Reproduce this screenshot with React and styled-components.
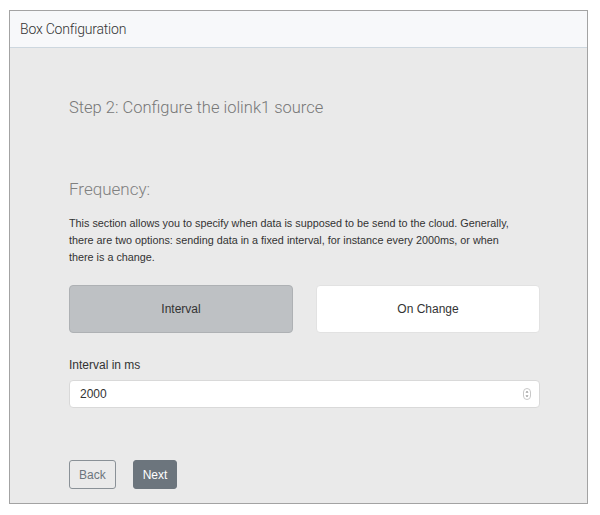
import React, { useState } from 'react'
import styled, { createGlobalStyle } from 'styled-components'

const GlobalStyle = createGlobalStyle`
  html, body {
    margin: 0;
    padding: 0;
    background: #ffffff;
  }
  body {
    font-family: "Liberation Sans", Arial, sans-serif;
    color: #333;
  }
`

const App = () => {
  const [mode, setMode] = useState('interval')
  const [interval, setInterval] = useState('2000')

  return (
    <Page>
      <GlobalStyle />
      <Card>
        <CardHeader>Box Configuration</CardHeader>
        <CardBody>
          <StepTitle>Step 2: Configure the iolink1 source</StepTitle>
          <SectionTitle>Frequency:</SectionTitle>
          <Description>
            This section allows you to specify when data is supposed to be send
            to the cloud. Generally, there are two options: sending data in a
            fixed interval, for instance every 2000ms, or when there is a
            change.
          </Description>
          <ChoiceRow>
            <Choice
              $active={mode === 'interval'}
              onClick={() => setMode('interval')}
            >
              Interval
            </Choice>
            <Choice
              $active={mode === 'change'}
              onClick={() => setMode('change')}
            >
              On Change
            </Choice>
          </ChoiceRow>
          <FieldLabel htmlFor="interval">Interval in ms</FieldLabel>
          <NumberField>
            <NumberInput
              id="interval"
              type="text"
              value={interval}
              onChange={(e) => setInterval(e.target.value)}
            />
            <Spinner viewBox="0 0 8 12" aria-hidden="true">
              <rect x="0.5" y="0.5" width="7" height="11" rx="3.5" fill="none" stroke="#c8c8c8" />
              <path d="M2.5 4.6 L4 3 L5.5 4.6 Z" fill="#777" />
              <path d="M2.5 7.4 L4 9 L5.5 7.4 Z" fill="#777" />
            </Spinner>
          </NumberField>
          <Actions>
            <BackButton>Back</BackButton>
            <NextButton>Next</NextButton>
          </Actions>
        </CardBody>
      </Card>
    </Page>
  )
}

export default App

const Page = styled.div`
  padding: 10px 12px 0 9px;
  width: 600px;
  box-sizing: border-box;
`

const Card = styled.div`
  border: 1px solid #a3a3a3;
  background: #eaeaea;
  height: 494px;
  box-sizing: border-box;
  display: flex;
  flex-direction: column;
`

const CardHeader = styled.div`
  background: #f7f8fa;
  border-bottom: 1px solid #cdd7df;
  height: 37px;
  box-sizing: border-box;
  display: flex;
  align-items: center;
  padding: 0 10px;
  font-family: "Roboto", "Liberation Sans", sans-serif;
  font-weight: 300;
  font-size: 14px;
  letter-spacing: -0.2px;
  color: #333;
`

const CardBody = styled.div`
  padding: 48px 47px 0 59px;
  display: flex;
  flex-direction: column;
`

const StepTitle = styled.h2`
  margin: 0;
  font-family: "Roboto", "Liberation Sans", sans-serif;
  font-weight: 300;
  font-size: 16.5px;
  line-height: 24px;
  color: #777;
`

const SectionTitle = styled.h3`
  margin: 57px 0 0;
  font-family: "Roboto", "Liberation Sans", sans-serif;
  font-weight: 300;
  font-size: 17px;
  line-height: 24px;
  color: #808080;
`

const Description = styled.p`
  margin: 14px 0 0;
  max-width: 450px;
  font-size: 10.8px;
  line-height: 17px;
  color: #333;
`

const ChoiceRow = styled.div`
  display: grid;
  grid-template-columns: 1fr 1fr;
  gap: 23px;
  margin-top: 19px;
`

const Choice = styled.button`
  height: 48px;
  border-radius: 4px;
  border: 1px solid ${(props) => (props.$active ? '#aeb1b4' : '#e2e2e2')};
  background: ${(props) => (props.$active ? '#bec1c4' : '#ffffff')};
  font-family: "Liberation Sans", Arial, sans-serif;
  font-size: 12px;
  color: #333;
  cursor: pointer;
`

const FieldLabel = styled.label`
  margin-top: 24px;
  font-size: 12px;
  line-height: 16px;
  color: #333;
`

const NumberField = styled.div`
  position: relative;
  margin-top: 7px;
`

const NumberInput = styled.input`
  width: 100%;
  box-sizing: border-box;
  height: 28px;
  border: 1px solid #d9d9d9;
  border-radius: 4px;
  background: #fff;
  padding: 0 10px;
  font-family: "Liberation Sans", Arial, sans-serif;
  font-size: 12px;
  color: #333;
  outline: none;
`

const Spinner = styled.svg`
  position: absolute;
  right: 9px;
  top: 8px;
  width: 8px;
  height: 12px;
`

const Actions = styled.div`
  display: flex;
  gap: 17px;
  margin-top: 52px;
`

const BaseButton = styled.button`
  height: 29px;
  padding: 0 9px;
  border-radius: 3px;
  font-family: "Liberation Sans", Arial, sans-serif;
  font-size: 12px;
  cursor: pointer;
`

const BackButton = styled(BaseButton)`
  background: transparent;
  border: 1px solid #8a9197;
  color: #6c757d;
`

const NextButton = styled(BaseButton)`
  background: #6c757d;
  border: 1px solid #6c757d;
  color: #fff;
`
